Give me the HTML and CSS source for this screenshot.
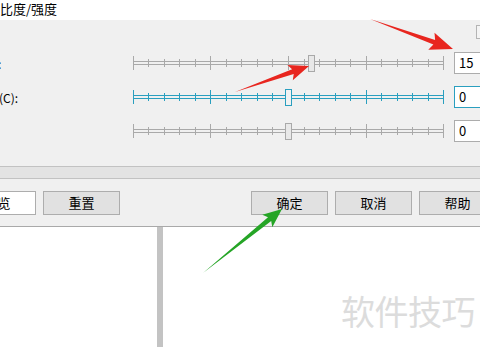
FILE: index.html
```html
<!DOCTYPE html>
<html lang="zh-CN">
<head>
  <meta charset="UTF-8">
  <title>亮度/对比度</title>
  <link rel="stylesheet" href="styles.css">
</head>
<body>

  <svg class="defs" width="0" height="0">
    <defs>
      <symbol id="scale" viewBox="0 0 326 34">
        <path d="M5 15.5H316M5 18.5H316" stroke="currentColor" fill="none"/>
        <path d="M5.5 10V24M82.5 10V24M160.5 10V24M238.5 10V24M315.5 10V24" stroke="currentColor" fill="none"/>
        <path d="M20.5 13V21M36.5 13V21M51.5 13V21M67.5 13V21M98.5 13V21M113.5 13V21M129.5 13V21M144.5 13V21M176.5 13V21M191.5 13V21M207.5 13V21M222.5 13V21M253.5 13V21M269.5 13V21M284.5 13V21M300.5 13V21" stroke="currentColor" fill="none"/>
      </symbol>
    </defs>
  </svg>

  <div class="titlebar"><span class="title">对比度/强度</span></div>

  <div class="panel">
    <div class="panel-top"><span class="corner-btn"></span></div>

    <div class="row">
      <span class="label short">亮度(B):</span>
      <svg class="slider" width="326" height="34" viewBox="0 0 326 34">
        <use href="#scale"/>
        <rect class="thumb" x="180.5" y="9.5" width="6" height="16"/>
      </svg>
      <div class="value">15</div>
    </div>

    <div class="row">
      <span class="label">对比度(C):</span>
      <svg class="slider active" width="326" height="34" viewBox="0 0 326 34">
        <use href="#scale"/>
        <rect class="thumb" x="157.5" y="9.5" width="6" height="16"/>
      </svg>
      <div class="value focus">0</div>
    </div>

    <div class="row">
      <span class="label hidden">强度:</span>
      <svg class="slider" width="326" height="34" viewBox="0 0 326 34">
        <use href="#scale"/>
        <rect class="thumb" x="157.5" y="9.5" width="6" height="16"/>
      </svg>
      <div class="value">0</div>
    </div>
  </div>

  <div class="band"></div>

  <div class="actions">
    <div class="btn preview">预览</div>
    <div class="btn">重置</div>
    <div class="btn ok">确定</div>
    <div class="btn">取消</div>
    <div class="btn">帮助</div>
  </div>

  <div class="workspace">
    <div class="divider"></div>
  </div>

  <div class="watermark">软件技巧</div>

  <svg class="marks" width="480" height="347" viewBox="0 0 480 347">
    <polygon fill="#e8261f" points="370,19 433.4,44.6 428.3,49.7 453,49 434.5,32.7 435.1,39.9"/>
    <polygon fill="#e8261f" points="235,92 293.7,74 292.8,80.2 309,66 287.4,65 292.1,69.2"/>
    <polygon fill="#25a526" points="203,273 271.2,221 272.3,227.2 282,209 262.3,214.8 268,217.2"/>
  </svg>

</body>
</html>
```

FILE: styles.css
```css
body {
  margin: 0;
  width: 480px;
  height: 347px;
  overflow: hidden;
  position: relative;
  background: #fff;
  color: #000;
  font-family: "Noto Sans CJK SC", "Noto Sans", sans-serif;
  font-size: 12px;
}
.defs {
  position: absolute;
}
.titlebar {
  height: 20px;
  background: #fff;
  font-size: 13px;
  line-height: 18px;
}
.title {
  display: block;
  text-indent: -13px;
}
.panel {
  background: #f0f0f0;
  height: 146px;
}
.panel-top {
  height: 26px;
  display: flex;
  justify-content: flex-end;
}
.corner-btn {
  margin-top: 5px;
  margin-right: -20px;
  width: 22px;
  height: 12px;
  border: 1px solid #b4b4b4;
  background: #f4f4f4;
}
.row {
  height: 34px;
  display: flex;
  align-items: center;
}
.label {
  width: 128px;
  flex-shrink: 0;
  text-indent: -37px;
  white-space: nowrap;
}
.label.short {
  text-indent: -42px;
}
.label.hidden {
  text-indent: -60px;
}
.slider {
  flex-shrink: 0;
  color: #a9a9a9;
}
.slider .thumb {
  fill: #e8e8e8;
  stroke: #a9a9a9;
}
.slider.active {
  color: #2a9fbf;
}
.slider.active .thumb {
  fill: #f2f2f2;
  stroke: #2a9fbf;
}
.value {
  flex-shrink: 0;
  width: 40px;
  height: 20px;
  border: 1px solid #acacac;
  background: #fff;
  padding-left: 4px;
  font-size: 13px;
  line-height: 20px;
}
.value.focus {
  border-color: #2a9fbf;
}
.band {
  height: 11px;
  background: #e3e3e3;
  border-top: 1px solid #c2c2c2;
  border-bottom: 1px solid #c2c2c2;
}
.actions {
  height: 47px;
  box-sizing: border-box;
  padding-top: 12px;
  background: #f0f0f0;
  display: flex;
  gap: 7px;
}
.btn {
  flex-shrink: 0;
  box-sizing: border-box;
  width: 77px;
  height: 24px;
  border: 1px solid #adadad;
  background: #e1e1e1;
  text-align: center;
  font-size: 13px;
  line-height: 22px;
}
.btn.preview {
  margin-left: -41px;
  background: #fff;
}
.btn.ok {
  margin-left: 124px;
}
.workspace {
  height: 120px;
  border-top: 1px solid #a9a9a9;
  background: #fff;
}
.divider {
  margin-left: 157px;
  width: 6px;
  height: 120px;
  background: #c3c3c3;
}
.watermark {
  position: absolute;
  right: 5px;
  top: 289px;
  font-size: 34px;
  line-height: 44px;
  color: #dcdcdc;
  letter-spacing: -0.5px;
}
.marks {
  position: absolute;
  left: 0;
  top: 0;
  pointer-events: none;
}
```
